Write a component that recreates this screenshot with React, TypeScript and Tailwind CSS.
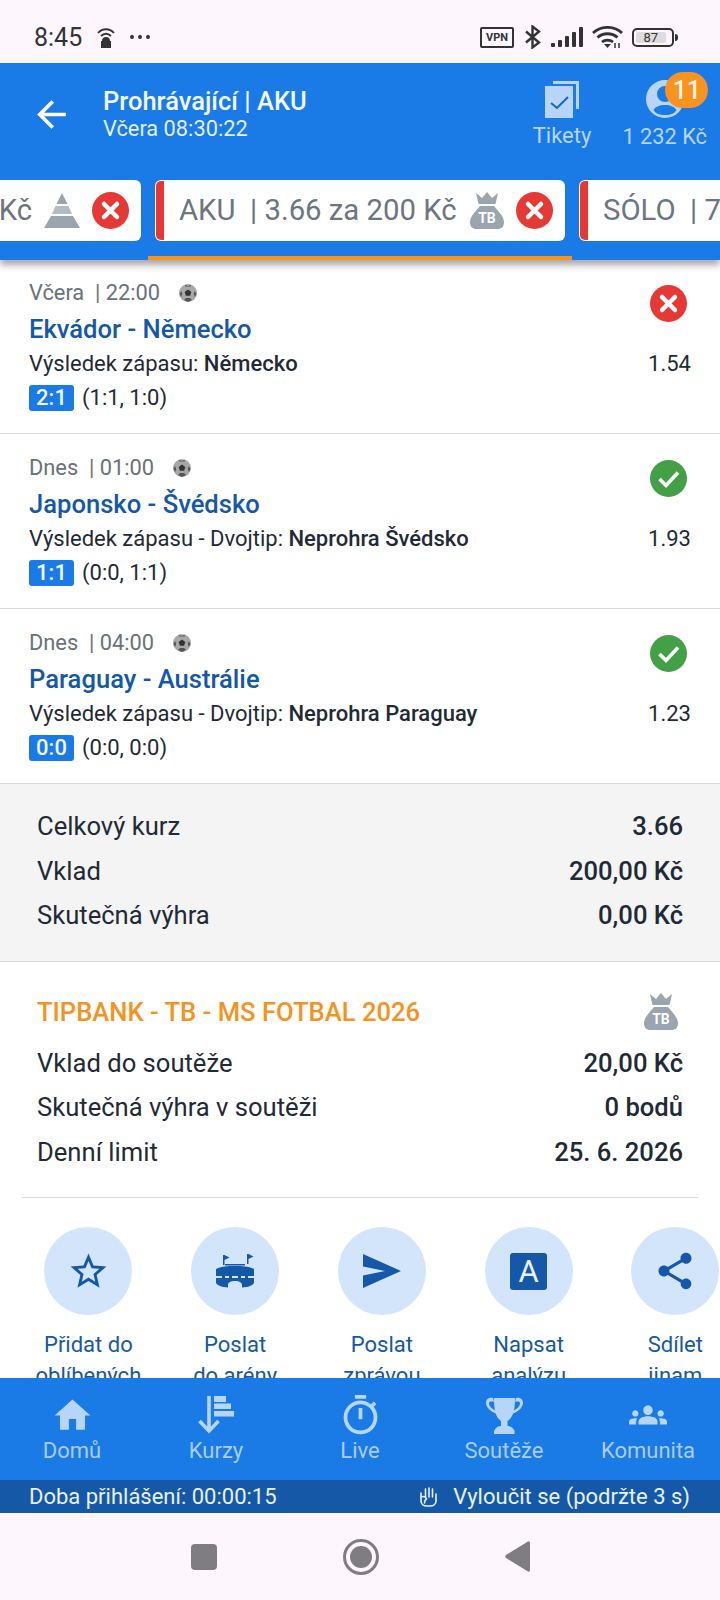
import React from 'react';

const CloseBadge = () => (
  <svg width="37" height="37" viewBox="0 0 37 37" className="shrink-0">
    <circle cx="18.5" cy="18.5" r="18.5" fill="#e53935" />
    <path d="M12 12l13 13M25 12L12 25" stroke="#fff" strokeWidth="4.5" strokeLinecap="round" />
  </svg>
);

const CheckBadge = () => (
  <svg width="37" height="37" viewBox="0 0 37 37" className="shrink-0">
    <circle cx="18.5" cy="18.5" r="18.5" fill="#43a047" />
    <path d="M9.5 19l6.500 6.500L28 12.500" stroke="#fff" strokeWidth="3.6" fill="none" />
  </svg>
);

const Bag = ({ className = '' }: { className?: string }) => (
  <svg width="34" height="37" viewBox="0 0 34 37" className={`shrink-0 ${className}`}>
    <path d="M6 1l6 5 5-6 5 6 6-5-2.500 11h-17z" fill="#9aa5ae" />
    <path d="M10 14h14c3 4 10 10 10 16 0 5-3 7-6 7H6c-3 0-6-2-6-7 0-6 7-12 10-16z" fill="#9aa5ae" />
    <text x="17" y="31" textAnchor="middle" fontFamily="Roboto, sans-serif" fontWeight="700" fontSize="14" fill="#fff">
      TB
    </text>
  </svg>
);

const Pyramid = () => (
  <svg width="36" height="35" viewBox="0 0 36 35" className="shrink-0">
    <path d="M18 0l5.500 11h-11z" fill="#9aa5ae" />
    <path d="M11.500 13h13l3.500 8H8z" fill="#b4bcc3" />
    <path d="M7 23h22l7 12H0z" fill="#9aa5ae" />
  </svg>
);

const Ball = () => (
  <svg width="18" height="18" viewBox="0 0 18 18" className="shrink-0">
    <circle cx="9" cy="9" r="9" fill="#a8a8a8" />
    <path d="M9 5.500l3.300 2.400-1.200 3.800H6.900L5.700 7.900z" fill="#333" />
    <path d="M6 .8L9 2l3-1.200-.5 1.700H6.500zM.6 10l1.600-3 1 3-1 3zM17.400 10l-1.600-3-1 3 1 3zM5 16l2-2h4l2 2-4 2z" fill="#555" />
  </svg>
);

const Tab = ({ label, icon, bar, width }: { label: string; icon: React.ReactNode; bar?: boolean; width?: string }) => (
  <div className={`flex h-[61px] shrink-0 items-center justify-between overflow-hidden rounded-md bg-white ${bar ? 'pl-px' : ''} ${width ?? ''}`}>
    <div className="flex h-full items-center">
      {bar && <div className="h-[59px] w-[8px] shrink-0 rounded-l-[5px] bg-[#e53935]" />}
      <span className={`mt-px whitespace-pre text-[29.300px] leading-none text-[#6b7680] ${bar ? 'ml-[15px]' : ''}`}>{label}</span>
    </div>
    {icon}
  </div>
);

const matches = [
  {
    date: 'Včera',
    time: '22:00',
    title: 'Ekvádor - Německo',
    market: 'Výsledek zápasu:',
    pick: 'Německo',
    odds: '1.54',
    score: '2:1',
    parts: '(1:1, 1:0)',
    won: false,
    top: 'pt-[18px]',
  },
  {
    date: 'Dnes',
    time: '01:00',
    title: 'Japonsko - Švédsko',
    market: 'Výsledek zápasu - Dvojtip:',
    pick: 'Neprohra Švédsko',
    odds: '1.93',
    score: '1:1',
    parts: '(0:0, 1:1)',
    won: true,
    top: 'pt-[19px]',
  },
  {
    date: 'Dnes',
    time: '04:00',
    title: 'Paraguay - Austrálie',
    market: 'Výsledek zápasu - Dvojtip:',
    pick: 'Neprohra Paraguay',
    odds: '1.23',
    score: '0:0',
    parts: '(0:0, 0:0)',
    won: true,
    top: 'pt-[19px]',
  },
];

const actions: { line1: string; line2: string; icon: React.ReactNode }[] = [
  {
    line1: 'Přidat do',
    line2: 'oblíbených',
    icon: (
      <svg width="43" height="43" viewBox="0 0 24 24" fill="#1558a8">
        <path d="M22 9.240l-7.190-.62L12 2 9.190 8.630 2 9.240l5.460 4.730L5.820 21 12 17.270 18.180 21l-1.630-7.030L22 9.240zM12 15.400l-3.760 2.270 1-4.280-3.320-2.880 4.380-.38L12 6.100l1.710 4.040 4.380.38-3.320 2.880 1 4.280L12 15.400z" />
      </svg>
    ),
  },
  {
    line1: 'Poslat',
    line2: 'do arény',
    icon: (
      <svg width="38" height="34" viewBox="0 0 38 34" fill="#1558a8">
        <path d="M7 1h1.500v10H7zM8.500 1l5 2.500-5 2.500zM31 0h1.500v10H31zM32.500 0l5 2.500-5 2.500zM9 10h20v1.500H9z" />
        <path d="M0 15c3-1.500 6-2.200 9-2.500 6-.6 14-.6 20 0 3 .3 6 1 9 2.500v7H0z" />
        <path d="M0 24h6v-2h3v2h4v-2h3v2h6v-2h3v2h4v-2h3v2h6v5c-2 3-6 4-12 4.500V31c0-2.500-3-4-7-4s-7 1.500-7 4v2.500C6 33 2 32 0 29z" />
      </svg>
    ),
  },
  {
    line1: 'Poslat',
    line2: 'zprávou',
    icon: (
      <svg width="38" height="34" viewBox="0 0 38 34" fill="#1558a8">
        <path d="M0 0l38 17L0 34V21.500L22 17 0 12.500z" />
      </svg>
    ),
  },
  {
    line1: 'Napsat',
    line2: 'analýzu',
    icon: (
      <div className="flex h-[37px] w-[37px] items-center justify-center rounded-[3px] bg-[#1558a8] text-[31px] leading-none text-[#e8f1fc]">
        A
      </div>
    ),
  },
  {
    line1: 'Sdílet',
    line2: 'jinam',
    icon: (
      <svg width="44" height="44" viewBox="0 0 24 24" fill="#1558a8">
        <path d="M18 16.080c-.76 0-1.440.3-1.960.77L8.910 12.700c.05-.23.09-.46.09-.7s-.04-.47-.09-.7l7.050-4.110c.54.5 1.250.81 2.040.81 1.660 0 3-1.340 3-3s-1.340-3-3-3-3 1.340-3 3c0 .24.04.47.09.7L8.040 9.810C7.500 9.310 6.790 9 6 9c-1.660 0-3 1.340-3 3s1.340 3 3 3c.79 0 1.500-.31 2.040-.81l7.120 4.160c-.05.21-.08.43-.08.65 0 1.610 1.310 2.920 2.920 2.920 1.610 0 2.920-1.310 2.920-2.920s-1.310-2.920-2.920-2.920z" />
      </svg>
    ),
  },
];

const navItems: { label: string; icon: React.ReactNode }[] = [
  {
    label: 'Domů',
    icon: (
      <svg width="43" height="43" viewBox="0 0 24 24" fill="#b6d5f8">
        <path d="M10 20v-6h4v6h5v-8h3L12 3 2 12h3v8z" />
      </svg>
    ),
  },
  {
    label: 'Kurzy',
    icon: (
      <svg width="37" height="38" viewBox="0 0 37 38">
        <path d="M11 0v35M1.500 25L11 35l9.500-10" stroke="#b6d5f8" strokeWidth="3.6" fill="none" />
        <path d="M16 0h12v6H16zM16 7.500h17V13H16zM16 15h20v5.500H16z" fill="#b6d5f8" />
      </svg>
    ),
  },
  {
    label: 'Live',
    icon: (
      <svg width="45" height="45" viewBox="0 0 24 24" fill="#b6d5f8">
        <path d="M15 1H9v2h6V1zm-4 13h2V8h-2v6zm8.030-6.610l1.420-1.420c-.43-.51-.9-.99-1.410-1.410l-1.420 1.420C16.070 4.740 14.120 4 12 4c-4.970 0-9 4.030-9 9s4.020 9 9 9 9-4.030 9-9c0-2.120-.74-4.070-1.970-5.610zM12 20c-3.870 0-7-3.130-7-7s3.130-7 7-7 7 3.130 7 7-3.130 7-7 7z" />
      </svg>
    ),
  },
  {
    label: 'Soutěže',
    icon: (
      <svg width="37" height="37" viewBox="0 0 37 37" fill="#b6d5f8">
        <path d="M8 1h21c0 10-1 19-7.500 23v5c3 0 6 2 7 5v3H8v-3c1-3 4-5 7-5v-5C9 20 8 11 8 1z" />
        <path d="M7 1C2 0 0 3 0 6c0 5 6 9 11 11l-1-3C6 12 3 9 3 6.500 3 4.500 5 4 8 5zM30 1c5-1 7 2 7 5 0 5-6 9-11 11l1-3c4-2 7-5 7-7.500 0-2-2-2.500-5-1.500z" />
      </svg>
    ),
  },
  {
    label: 'Komunita',
    icon: (
      <svg width="38" height="38" viewBox="0 0 24 24" fill="#b6d5f8">
        <path d="M12 12.750c1.630 0 3.070.39 4.240.9 1.080.48 1.760 1.560 1.760 2.730V18H6v-1.610c0-1.180.68-2.260 1.760-2.730 1.170-.52 2.610-.91 4.240-.91zM4 13c1.100 0 2-.9 2-2s-.9-2-2-2-2 .9-2 2 .9 2 2 2zm1.130 1.100c-.37-.06-.74-.1-1.130-.1-.99 0-1.930.21-2.780.58C.48 14.900 0 15.620 0 16.430V18h4.500v-1.610c0-.83.23-1.610.63-2.290zM20 13c1.100 0 2-.9 2-2s-.9-2-2-2-2 .9-2 2 .9 2 2 2zm4 3.430c0-.81-.48-1.530-1.220-1.850-.85-.37-1.790-.58-2.780-.58-.39 0-.76.04-1.130.1.4.68.63 1.460.63 2.290V18H24v-1.570zM12 6c1.660 0 3 1.340 3 3s-1.340 3-3 3-3-1.340-3-3 1.340-3 3-3z" />
      </svg>
    ),
  },
];

const StatusBar = () => (
  <div className="flex h-[63px] shrink-0 items-center bg-[#fdf7fd] pl-[34px] pt-[11px] text-[#333]">
    <span className="w-[63px] text-[25px] leading-none">8:45</span>
    <svg width="18" height="21" viewBox="0 0 18 21" fill="none" stroke="#333" strokeWidth="1.800">
      <path d="M1 6c4.500-5 11.500-5 16 0M4 9c3-3 7-3 10 0" />
      <path d="M5 14a4 4 0 0 1 8 0h1v7H4v-7z" fill="#333" stroke="none" />
    </svg>
    <span className="ml-[15px] flex gap-[4px]">
      <i className="h-[4px] w-[4px] rounded-full bg-[#333]" />
      <i className="h-[4px] w-[4px] rounded-full bg-[#333]" />
      <i className="h-[4px] w-[4px] rounded-full bg-[#333]" />
    </span>
    <span className="ml-[330px] flex h-[21px] w-[34px] items-center justify-center rounded-[2px] border-2 border-[#333] text-[11px] font-bold leading-none">
      VPN
    </span>
    <svg width="16" height="24" viewBox="0 0 16 24" fill="none" stroke="#333" strokeWidth="2.400" className="ml-[11px]">
      <path d="M1 6.500l13 11-6.500 5v-21l6.500 5-13 11" />
    </svg>
    <svg width="32" height="20" viewBox="0 0 32 20" fill="#333" className="ml-[10px]">
      <rect x="0" y="16" width="4" height="4" rx="1" />
      <rect x="7" y="13" width="4" height="7" rx="1" />
      <rect x="14" y="9" width="4" height="11" rx="1" />
      <rect x="21" y="5" width="4" height="15" rx="1" />
      <rect x="28" y="0" width="4" height="20" rx="1" />
    </svg>
    <svg width="31" height="22" viewBox="0 0 31 22" fill="none" stroke="#333" strokeWidth="2.800" className="ml-[9px]">
      <path d="M1 7c8-7.500 21-7.500 29 0M5.500 11.500c5.500-5 14.500-5 20 0M10 16c3-2.500 8-2.500 11 0" />
      <path d="M15.500 22l-3.500-4h7z" fill="#333" stroke="none" />
      <path d="M23 17v5M27 17v5" strokeWidth="1.500" />
    </svg>
    <span className="ml-[9px] flex h-[19px] w-[42px] items-center rounded-[5px] border-2 border-[#333] p-[2px]">
      <span className="flex h-full w-[87%] items-center justify-center rounded-[2px] bg-[#dedbde] text-[13px] leading-none">
        87
      </span>
    </span>
    <i className="ml-[1px] h-[7px] w-[3px] rounded-r-sm bg-[#333]" />
  </div>
);

const Header = () => (
  <div className="relative z-10 shrink-0 bg-[#1a7ae6] shadow-[0_5px_7px_rgba(0,0,0,0.35)]">
    <div className="flex h-[117px] items-start pl-[30px] pr-[13px]">
      <svg width="43" height="43" viewBox="0 0 24 24" fill="#fff" className="mt-[30px] shrink-0">
        <path d="M20 11H7.830l5.590-5.590L12 4l-8 8 8 8 1.410-1.410L7.830 13H20v-2z" />
      </svg>
      <div className="ml-[30px] flex-1 pt-[23px]">
        <div className="text-[25.500px] font-medium leading-[30px] text-[#f2f8fe]">Prohrávající | AKU</div>
        <div className="text-[21.800px] leading-[26px] text-[#e3effc]">Včera 08:30:22</div>
      </div>
      <div className="mr-[31px] flex flex-col items-center pt-[18px] text-[#b6d5f8]">
        <svg width="34" height="37" viewBox="0 0 34 37">
          <path d="M8 0h26v28h-3V3H8z" fill="#b6d5f8" />
          <rect x="0" y="5" width="28" height="32" fill="#b6d5f8" />
          <path d="M6 22l6 5 11-11" stroke="#1a63bb" strokeWidth="2" fill="none" />
        </svg>
        <span className="mt-[5px] text-[22px] leading-[26px]">Tikety</span>
      </div>
      <div className="relative flex flex-col items-center pt-[17px] text-[#b6d5f8]">
        <svg width="38" height="39" viewBox="0 0 38 39" fill="#b6d5f8">
          <path d="M19 0a19 19 0 1 0 0 38 19 19 0 0 0 0-38zm0 35c-6 0-10-2-11.500-5 1.500-3 6-5 11.500-5s10 2 11.500 5c-1.500 3-5.500 5-11.500 5zm0-13a8 8 0 1 1 0-16 8 8 0 0 1 0 16z" />
        </svg>
        <span className="mt-[5px] text-[21.800px] leading-[26px]">1 232 Kč</span>
        <span className="absolute left-[43px] top-[9px] flex h-[36px] w-[43px] items-center justify-center rounded-full bg-[#f7931e] text-[25px] font-medium leading-none text-[#fdf3e4]">
          11
        </span>
      </div>
    </div>
    <div className="flex overflow-hidden">
      <div className="flex w-[148px] shrink-0 justify-end border-b-4 border-transparent pb-[15px] pr-[7px]">
        <Tab
          label="KOMBI  | 4.12 za 100 Kč"
          icon={
            <div className="ml-[12px] flex items-center gap-[12px] pr-[12px]">
              <Pyramid />
              <CloseBadge />
            </div>
          }
        />
      </div>
      <div className="shrink-0 border-b-4 border-[#f7931e] px-[7px] pb-[15px]">
        <Tab
          bar
          width="w-[410px]"
          label="AKU  | 3.66 za 200 Kč"
          icon={
            <div className="flex items-center gap-[12px] pr-[12px]">
              <Bag />
              <CloseBadge />
            </div>
          }
        />
      </div>
      <div className="shrink-0 border-b-4 border-transparent px-[7px] pb-[15px]">
        <Tab
          bar
          label="SÓLO  | 7.20 za 100 Kč"
          icon={
            <div className="ml-[14px] flex items-center gap-[12px] pr-[12px]">
              <CloseBadge />
            </div>
          }
        />
      </div>
    </div>
  </div>
);

const App: React.FC = () => {
  return (
    <div className="flex h-[1600px] w-[720px] flex-col overflow-hidden bg-white font-['Roboto',sans-serif] text-[#1f2a37]">
      <StatusBar />
      <Header />

      <div className="flex-1 overflow-hidden">
        {matches.map((m) => (
          <div key={m.title} className={`flex justify-between border-b border-[#d8d8d8] pb-[20px] pl-[29px] pr-[29px] ${m.top}`}>
            <div>
              <div className="flex h-[30px] items-center text-[21.800px] text-[#69727a]">
                <span className="whitespace-pre">{`${m.date}  | ${m.time}`}</span>
                <span className="ml-[19px]">
                  <Ball />
                </span>
              </div>
              <div className="mt-[2px] text-[25.600px] font-medium leading-[38px] text-[#1558a8]">{m.title}</div>
              <div className="mt-px text-[22px] leading-[30px]">
                {m.market} <span className="font-medium">{m.pick}</span>
              </div>
              <div className="mt-[4px] flex items-center text-[22px] leading-[30px]">
                <span className="flex h-[26px] w-[45px] items-center justify-center rounded-[3px] bg-[#1a7ae6] font-medium leading-none text-[#f2f8fe]">
                  {m.score}
                </span>
                <span className="ml-[8px]">{m.parts}</span>
              </div>
            </div>
            <div className="flex flex-col items-end">
              <div className="mr-[4px] mt-[7px]">{m.won ? <CheckBadge /> : <CloseBadge />}</div>
              <div className="mt-[27px] text-[22px] leading-[30px]">{m.odds}</div>
            </div>
          </div>
        ))}

        <div className="border-b border-[#d8d8d8] bg-[#f4f4f4] pb-[23px] pl-[37px] pr-[37px] pt-[20px] text-[25.600px] leading-[44.500px]">
          {[
            ['Celkový kurz', '3.66'],
            ['Vklad', '200,00 Kč'],
            ['Skutečná výhra', '0,00 Kč'],
          ].map(([label, value]) => (
            <div key={label} className="flex justify-between">
              <span>{label}</span>
              <span className="font-medium">{value}</span>
            </div>
          ))}
        </div>

        <div className="pb-[23px] pl-[37px] pr-[37px] pt-[30px] text-[25.600px] leading-[44.500px]">
          <div className="mb-[9px] flex items-center justify-between leading-[40px]">
            <span className="font-medium text-[#f39322]">TIPBANK - TB - MS FOTBAL 2026</span>
            <Bag className="mr-[5px]" />
          </div>
          {[
            ['Vklad do soutěže', '20,00 Kč'],
            ['Skutečná výhra v soutěži', '0 bodů'],
            ['Denní limit', '25. 6. 2026'],
          ].map(([label, value]) => (
            <div key={label} className="flex justify-between">
              <span>{label}</span>
              <span className="font-medium">{value}</span>
            </div>
          ))}
        </div>
        <div className="mx-[22px] h-px bg-[#d8d8d8]" />

        <div className="flex pl-[15px] pt-[29px]">
          {actions.map((a) => (
            <div key={a.line1 + a.line2} className="flex w-[146.750px] shrink-0 flex-col items-center">
              <div className="flex h-[88px] w-[88px] items-center justify-center rounded-full bg-[#d3e5fa]">{a.icon}</div>
              <div className="mt-[14px] text-center text-[22px] leading-[31px] text-[#1558a8]">
                <div>{a.line1}</div>
                <div>{a.line2}</div>
              </div>
            </div>
          ))}
        </div>
      </div>

      <div className="flex h-[102px] shrink-0 bg-[#1a7ae6] pt-[15px]">
        {navItems.map((item) => (
          <div key={item.label} className="flex flex-1 flex-col items-center">
            <div className="flex h-[44px] items-center justify-center">{item.icon}</div>
            <span className="text-[22px] leading-[28px] text-[#a9cdf6]">{item.label}</span>
          </div>
        ))}
      </div>

      <div className="flex h-[33px] shrink-0 items-center justify-between bg-[#1558a8] pl-[29px] pr-[30px] text-[22px] leading-none text-[#e8f1fc]">
        <span>Doba přihlášení: 00:00:15</span>
        <span className="flex items-center">
          <svg width="17" height="20" viewBox="0 0 17 20" fill="none" stroke="#e8f1fc" strokeWidth="1.600" strokeLinecap="round" className="mr-[16px]">
            <path d="M1 6v8c0 3 2.500 5 6 5h3c3.500 0 6-2 6-5V7M5.500 10V2M9 10V1M12.500 10V2M16 10V7M1 10c2-1 5-.5 5.500 2-1 .5-2 2-2 4" />
          </svg>
          Vyloučit se (podržte 3 s)
        </span>
      </div>

      <div className="flex h-[87px] shrink-0 items-center justify-center gap-[126px] bg-[#fdf7fd]">
        <div className="h-[26px] w-[26px] rounded-[4px] bg-[#807d82]" />
        <div className="flex h-[36px] w-[36px] items-center justify-center rounded-full border-[3px] border-[#807d82]">
          <div className="h-[22px] w-[22px] rounded-full bg-[#807d82]" />
        </div>
        <svg width="25" height="31" viewBox="0 0 25 31" fill="#807d82">
          <path d="M25 2v27c0 1.500-1 2-2 1.500L1 17c-1-.8-1-2 0-3L23 .5c1-.5 2 0 2 1.500z" />
        </svg>
      </div>
    </div>
  );
};

export default App;
